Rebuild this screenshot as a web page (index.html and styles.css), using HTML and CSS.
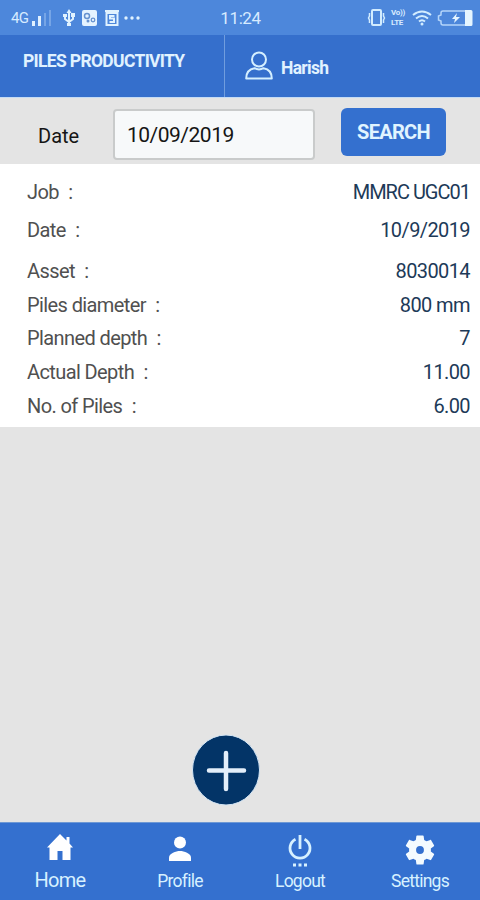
FILE: index.html
```html
<!DOCTYPE html>
<html lang="en">
<head>
<meta charset="utf-8">
<title>Piles Productivity</title>
<link rel="stylesheet" href="styles.css">
</head>
<body>
<div class="screen">
  <div class="status">
    <div class="status-left">
      <span class="net">4G</span>
      <svg class="signal" width="20" height="16" viewBox="0 0 20 16"><path d="M0 11h3v5H0zM6 6h3v10H6z" fill="#e0f0ff"/><path d="M12 3h2v13h-2zM17 0h2v16h-2z" fill="#76a5e6"/></svg>
      <svg class="usb" width="12" height="18" viewBox="0 0 12 18" fill="none" stroke="#e0f2ff" stroke-width="2"><path d="M6 2v14M2 7v3l4 3 4-3V6"/><path d="M3.500 4 6 0l2.500 4zM4 14h4v3H4zM0 5h4v3H0zM8 4h4v4H8z" fill="#e0f2ff" stroke="none"/></svg>
      <svg class="app" width="15" height="16" viewBox="0 0 15 16"><rect width="15" height="16" rx="2" fill="#e5f3ff"/><circle cx="5" cy="6" r="2.500" fill="none" stroke="#6792cf" stroke-width="1.500"/><circle cx="6" cy="11" r="1.500" fill="#6792cf"/><circle cx="11" cy="10" r="1.800" fill="none" stroke="#6792cf" stroke-width="1.300"/></svg>
      <svg class="note" width="14" height="16" viewBox="0 0 14 16" fill="none" stroke="#e0f2ff" stroke-width="2"><path d="M0 1h14M1.500 3h11v12h-11zM9.500 6H5v2.500h4V12H4.500" /></svg>
      <svg class="dots" width="18" height="4" viewBox="0 0 18 4" fill="#e0f2ff"><circle cx="3" cy="2" r="1.700"/><circle cx="9" cy="2" r="1.700"/><circle cx="15" cy="2" r="1.700"/></svg>
    </div>
    <span class="clock">11:24</span>
    <div class="status-right">
      <svg width="19" height="17" viewBox="0 0 19 17" fill="none" stroke="#d2ecff" stroke-width="2"><rect x="5" y="1" width="9" height="15" rx="1"/><path d="M2.500 4v3l-1 2 1 2v3M16.500 4v3l1 2-1 2v3" stroke-width="1.500"/></svg>
      <span class="volte"><span>Vo))</span><span>LTE</span></span>
      <svg width="20" height="16" viewBox="0 0 20 16" fill="none" stroke="#d2ecff" stroke-width="2"><path d="M1 5q9-7 18 0M4 8.500q6-5 12 0M7 11.500q3-2.500 6 0"/><circle cx="10" cy="14" r="1.500" fill="#d2ecff" stroke="none"/></svg>
      <svg width="36" height="16" viewBox="0 0 36 16"><path d="M29 1H6a2 2 0 0 0-2 2v2L1.500 6v4L4 11v2a2 2 0 0 0 2 2h23" fill="none" stroke="#b4d5fa" stroke-width="1.500"/><path d="M28 0h6a1.500 1.500 0 0 1 1.500 1.500v13A1.500 1.500 0 0 1 34 16h-6zM20 3l-5 6h3l-1 4 6-6h-4z" fill="#e5f5ff"/></svg>
    </div>
  </div>

  <header class="header">
    <h1>PILES PRODUCTIVITY</h1>
    <div class="user">
      <svg width="28" height="30" viewBox="0 0 28 30" fill="none" stroke="#d4efff" stroke-width="2"><circle cx="14" cy="8.500" r="7"/><path d="M1.200 27.500q0-9 8.300-10.300 4.500 2.600 9 0 8.300 1.300 8.300 10.300z" stroke-linejoin="round"/></svg>
      <span>Harish</span>
    </div>
  </header>

  <form class="search">
    <label for="date">Date</label>
    <input id="date" type="text" value="10/09/2019">
    <button type="button">SEARCH</button>
  </form>

  <dl class="details">
    <div class="row job"><dt>Job <i>:</i></dt><dd>MMRC UGC01</dd></div>
    <div class="row day"><dt>Date <i>:</i></dt><dd>10/9/2019</dd></div>
    <div class="row"><dt>Asset <i>:</i></dt><dd>8030014</dd></div>
    <div class="row"><dt>Piles diameter <i>:</i></dt><dd>800 mm</dd></div>
    <div class="row"><dt>Planned depth <i>:</i></dt><dd>7</dd></div>
    <div class="row"><dt>Actual Depth <i>:</i></dt><dd>11.00</dd></div>
    <div class="row"><dt>No. of Piles <i>:</i></dt><dd>6.00</dd></div>
  </dl>

  <main class="empty">
    <button class="add" type="button" aria-label="Add">
      <svg width="70" height="72" viewBox="0 0 70 72"><ellipse cx="35" cy="36" rx="33.500" ry="35" fill="#033467" stroke="#d3e5f5" stroke-width="1"/><path d="M35 19v36M18 36.500h35" stroke="#e3eefa" stroke-width="4.500" stroke-linecap="round"/></svg>
    </button>
  </main>

  <nav class="tabs">
    <a class="tab home"><svg width="26" height="26" viewBox="0 0 26 26" fill="#fff"><path d="M13 0 0 13.500h2.500V26h8v-9h5v9h8V13.500H26L22.500 9.500V3h-3v3.500z"/></svg><span>Home</span></a>
    <a class="tab"><svg width="26" height="26" viewBox="0 0 26 26" fill="#fff"><circle cx="13" cy="8.500" r="6"/><path d="M2 27v-3.500c0-4 7-6.500 11-6.500s11 2.500 11 6.500V27z"/></svg><span>Profile</span></a>
    <a class="tab"><svg class="power" width="26" height="34" viewBox="0 0 26 34" fill="none" stroke="#d7f1ff" stroke-width="2.800"><path d="M13 1v14M8.500 5.200a10 10 0 1 0 9 0"/><path d="M6 31h3M11.500 31h3M17 31h3" stroke-width="3"/></svg><span>Logout</span></a>
    <a class="tab"><svg class="gear" width="32" height="32" viewBox="1 1 22 22" fill="#f4fbff"><path d="M19.430 12.980c.04-.32.07-.64.07-.98s-.03-.66-.07-.98l2.110-1.650c.19-.15.24-.42.12-.64l-2-3.460c-.12-.22-.39-.3-.61-.22l-2.490 1c-.52-.4-1.080-.73-1.690-.98l-.38-2.650A.49.49 0 0 0 14 2h-4c-.25 0-.46.18-.49.42l-.38 2.650c-.61.25-1.170.59-1.690.98l-2.490-1c-.23-.09-.49 0-.61.22l-2 3.460c-.13.22-.07.49.12.64l2.110 1.650c-.04.32-.07.65-.07.98s.03.66.07.98l-2.110 1.650c-.19.15-.24.42-.12.64l2 3.460c.12.22.39.3.61.22l2.490-1c.52.4 1.080.73 1.690.98l.38 2.650c.03.24.24.42.49.42h4c.25 0 .46-.18.49-.42l.38-2.650c.61-.25 1.170-.59 1.690-.98l2.490 1c.23.09.49 0 .61-.22l2-3.460c.12-.22.07-.49-.12-.64zM12 14.700a2.700 2.700 0 1 1 0-5.400 2.700 2.700 0 0 1 0 5.400z"/></svg><span>Settings</span></a>
  </nav>
</div>
</body>
</html>
```
FILE: styles.css
```css
* { box-sizing: border-box; }
body { margin: 0; font-family: Roboto, "Liberation Sans", sans-serif; }
.screen { width: 480px; height: 900px; display: flex; flex-direction: column; background: #e4e4e4; }
.screen > * { flex-shrink: 0; }

.status { height: 35px; padding: 0 7px 0 11px; background: #4d87db; color: #d7ebff; display: grid; grid-template-columns: 1fr auto 1fr; align-items: center; }
.status-left, .status-right { display: flex; align-items: center; }
.status-right { justify-content: flex-end; gap: 5px; }
.net { font-size: 15px; letter-spacing: -0.8px; width: 21px; }
.signal { margin-top: 1px; }
.usb { margin-left: 11px; }
.app { margin-left: 7px; }
.note { margin-left: 8px; }
.dots { margin-left: 4px; }
.clock { font-size: 17px; letter-spacing: -0.4px; margin-right: 3px; }
.volte { display: flex; flex-direction: column; gap: 1px; font-size: 8px; line-height: 9px; letter-spacing: -0.3px; font-weight: 700; width: 16px; }

.header { height: 63px; background: #356fcc; color: #e0f2ff; display: flex; border-bottom: 1px solid #c4dbf5; }
.header h1 { width: 225px; margin: 0; padding: 16px 0 0 23px; font-size: 17.500px; line-height: 20px; letter-spacing: -0.67px; font-weight: 700; border-right: 1px solid #709dde; white-space: nowrap; }
.user { display: flex; align-items: center; gap: 8px; padding: 0 0 1px 20px; font-size: 17.500px; letter-spacing: -0.7px; font-weight: 700; }
.user span { padding-top: 4px; }

.search { height: 66px; background: #e4e4e4; display: flex; padding: 10px 0 0 38px; }
.search label { width: 75px; padding-top: 16px; font-size: 20px; line-height: 24px; color: #151515; }
.search input { width: 202px; height: 51px; margin-top: 1px; padding: 0 12px; border: 2px solid #c9cbcb; border-radius: 4px; background: #f7f9fa; font: 21px Roboto, sans-serif; letter-spacing: -0.5px; color: #151515; }
.search button { width: 105px; height: 48px; margin-left: 26px; padding: 0; border: 0; border-radius: 6px; background: #3470cf; color: #e0f4ff; font: 700 20px Roboto, sans-serif; letter-spacing: -0.7px; }

.details { height: 263px; margin: 0; padding: 10px 10px 0 27px; background: #fff; }
.row { display: flex; justify-content: space-between; height: 33.700px; font-size: 20px; line-height: 36px; letter-spacing: -0.6px; color: #505050; }
.row.job { height: 38px; }
.row.day { height: 41px; }
dt, dd { margin: 0; }
dt i { font-style: normal; margin-left: 5px; }
dd { color: #1d3a58; }
.job dd { letter-spacing: -1px; }

.empty { flex: 1; display: flex; align-items: flex-end; padding: 0 0 16px 191px; }
.add { border: 0; padding: 0; background: none; display: flex; }

.tabs { height: 78px; background: #3470cf; border-top: 1px solid #6d98d5; display: grid; grid-template-columns: repeat(4, 1fr); }
.tab { display: flex; flex-direction: column; align-items: center; justify-content: space-between; padding: 11px 0 8px; color: #d7f1ff; font-size: 17.500px; line-height: 22px; letter-spacing: -0.75px; }
.tab svg { height: 26px; overflow: visible; }
.tab .power { height: 34px; }
.tab .gear { height: 32px; }
.home { font-size: 20px; padding-bottom: 9px; }
```
